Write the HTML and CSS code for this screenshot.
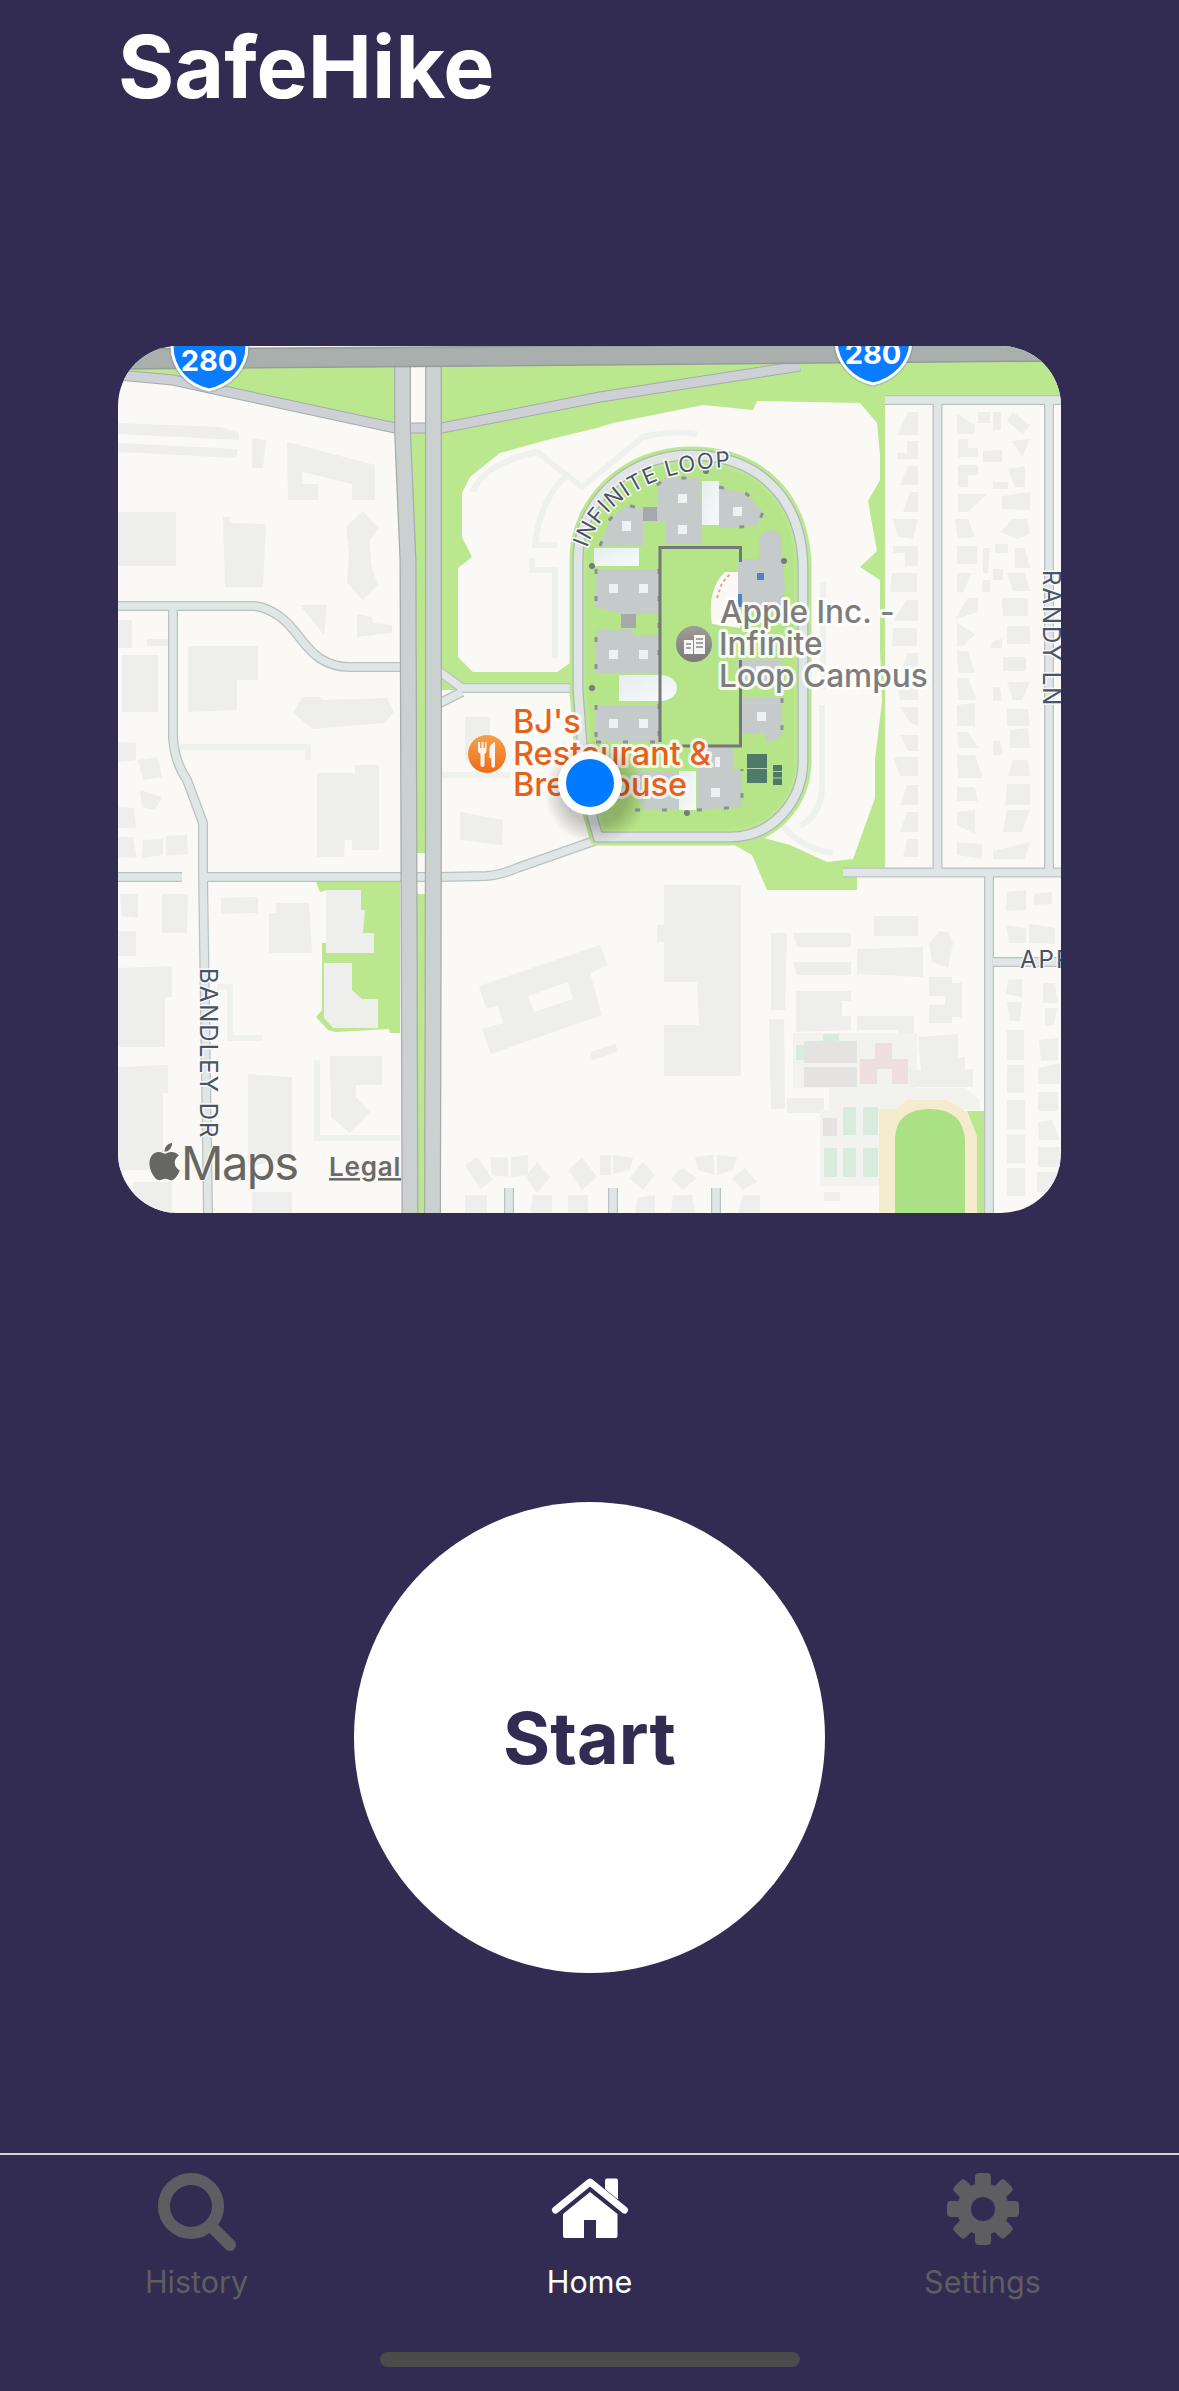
FILE: index.html
```html
<!DOCTYPE html>
<html lang="en">
<head>
  <meta charset="UTF-8">
  <meta name="viewport" content="width=device-width, initial-scale=1.0">
  <title>SafeHike</title>
  <link rel="stylesheet" href="styles.css">
</head>
<body>

  <div class="screen">
    <h1 class="title">SafeHike</h1>

    <div class="map">
      <!-- viewBox uses page coordinates so shapes can be read straight off the screenshot -->
      <svg class="map-svg" viewBox="118 346 943 867" width="943" height="867">
        <defs>
          <linearGradient id="wing" x1="0" y1="0" x2="1" y2="1">
            <stop offset="0" stop-color="#e6edf0"/>
            <stop offset="1" stop-color="#f7fafa"/>
          </linearGradient>
          <linearGradient id="poiFood" x1="0" y1="0" x2="0" y2="1">
            <stop offset="0" stop-color="#f5a14a"/>
            <stop offset="1" stop-color="#ee6c18"/>
          </linearGradient>
          <linearGradient id="poiOffice" x1="0" y1="0" x2="0" y2="1">
            <stop offset="0" stop-color="#a09c98"/>
            <stop offset="1" stop-color="#7c7a78"/>
          </linearGradient>
          <radialGradient id="dotShadow">
            <stop offset="0.6" stop-color="#000" stop-opacity="0.22"/>
            <stop offset="1" stop-color="#000" stop-opacity="0"/>
          </radialGradient>
          <path id="ringPath" d="M578,690 V560 C578,500 630,455 690,455 C760,455 803,500 803,570 V760 C803,802 772,837 730,837 H598 L586,795 L578,690 Z"/>
          <path id="loopLabel" d="M587,548 C603,502 655,464 750,467"/>
          <g id="streets">
            <path d="M118,606 H255 C275,609 288,622 300,638 C312,654 325,667 350,667 H402"/>
            <path d="M173,606 V737 C174,755 180,770 187,780 L203,823 V873 L208,1213"/>
            <path d="M118,877 H182 M204,877 H440 L487,876 C500,875 510,871 517,868 L597,840 L625,837 H730"/>
            <path d="M440,672 L462,688 H578 M440,703 L462,692"/>
            <path d="M885,400 H1061 M937.5,400 V872 M1049,400 V872 M843,872.5 H1061 M989,872 V1213 M993,962 H1061"/>
            <path d="M509,1188 V1213 M613,1188 V1213 M716,1188 V1213"/>
          </g>
          <g id="ramps">
            <path d="M118,375 L173,380 L233,393 L395,428 H442 L600,397 L800,366"/>
          </g>
          <g id="mainRoads">
            <path class="road-wide" d="M402.5,362 V430 L408,560 L410,1213"/>
            <path class="road-wide" d="M433.5,362 V800 L432.5,1213"/>
          </g>
        </defs>

        <rect class="m-land" x="118" y="346" width="943" height="867"/>

        <!-- parks -->
        <path class="m-park" d="M118,362 H395 V428 L233,393 L118,375 Z"/>
        <path class="m-park" d="M405,433 H428 V853 H405 Z M405,894 H428 V1213 H405 Z"/>
        <path class="m-park" d="M436,360 L1061,354 V396 H885 V869 L857,872 V890 H767 L752,855 L720,837 H600 L588,790 L575,690 H436 Z"/>
        <path class="m-park" d="M316,882 H400 V1033 H390 L389,1029 L335,1032 L328,1030 L316,1017 L322,1010 V943 H327 V890 L320,892 Z"/>
        <rect class="m-land" x="409" y="366" width="18" height="58"/>

        <!-- open ground around the campus -->
        <path class="m-land" d="M462,493 L470,477 L500,453 L547,440 L597,428 L613,423 L703,405 L753,410 L757,401 L860,403 L877,423 L880,455 L880,480 L868,501 L877,551 L860,567 L880,580 L880,651 L882,701 L875,759 L875,798 L853,859 L827,862 L790,845 L760,837 L600,800 L570,663 L557,672 L473,672 L458,657 L458,568 L472,557 L462,537 Z"/>

        <!-- footpaths -->
        <g class="m-path">
          <path d="M473,492 C480,473 500,460 537,452 L582,487 L643,437 Q670,430 697,434"/>
          <path d="M565,477 C550,490 538,515 535,545 H557 M532,558 V570 H555 V658"/>
          <path d="M823,582 V690 M822,705 V790 Q820,815 800,826 M783,826 Q800,848 833,853"/>
          <path d="M317,1060 V1138 H400 M217,987 H230 V1038 H262 M180,747 H308 V760 M442,775 H510"/>
        </g>

        <!-- buildings -->
        <path class="m-bld" fill-rule="evenodd" d="M118,423L220,427L239,433L239,440L118,434Z M118,443L238,449L236,458L118,452Z M252,438L266,440L263,468L252,468Z
          M287,442L375,465L375,500L352,500L352,484L302,472L302,484L318,484L318,500L288,500Z M118,512H176V566H118Z M223,517L230,517L230,523L266,524L263,587L225,587Z
          M363,511L378,528L370,540L371,565L378,585L363,600L347,583L349,553L346,527Z M300,605L327,605L324,635Z M357,614L372,617L373,623L392,625L392,633L357,637Z
          M118,620H132V648H118Z M147,639H168V646H147Z M122,655H158V712H122Z M188,646L258,646L258,680L237,680L237,710L188,712Z
          M302,697L320,697L322,700L387,698L394,712L385,723L313,729L293,713Z M118,742L136,743L136,760L118,762Z M138,760L158,757L162,777L143,780Z
          M317,773L355,773L355,765L379,765L379,850L352,850L352,840L345,840L344,857L317,857Z M465,717H490V760H465Z M460,812L503,820L502,845L460,840Z
          M140,790L162,797L155,810L142,807Z M118,807L134,808L136,828L118,828Z M118,837L133,837L137,858L118,857Z M143,840L163,839L163,855L142,858Z M166,836L187,835L188,854L166,856Z
          M120,894L138,894L138,918L122,916Z M162,894L188,894L187,933L162,933Z M118,931H136V956H118Z M221,898L258,897L258,913L221,914Z
          M276,903L309,903L312,953L269,953L269,913L276,913Z M326,890L361,890L361,910L365,910L363,933L374,933L374,953L326,953Z
          M324,963L352,963L352,990L362,999L378,999L378,1028L333,1028L324,1018Z M118,968L172,966L172,997L165,997L165,1047L118,1047Z
          M118,1067L168,1065L168,1093L163,1093L163,1170L118,1170Z M248,1074L292,1077L292,1157L248,1167Z
          M330,1056L382,1056L382,1085L356,1085L356,1097L370,1112L350,1133L331,1117Z M133,1182H172V1213H133Z M252,1192H292V1213H252Z
          M479,986L600,945L608,965L590,973L602,1015L491,1054L482,1029L503,1023L498,1006L486,1008Z M528,996L568,982L573,999L534,1012Z M590,1052L616,1044L617,1052L592,1060Z
          M664,885L741,885L741,1076L664,1076L664,1025L699,1025L697,982L664,982L664,942L657,942L657,925L664,925Z
          M771,933L787,933L785,1010L771,1010Z M769,1019L784,1019L785,1109L771,1109Z M793,933L851,933L851,947L797,947Z M793,962L851,962L851,975L797,975Z
          M874,916H918V936H874Z M857,949L923,947L923,977L857,974Z M940,931L948,932L953,943L948,968L932,962L929,943Z
          M929,977L952,977L952,983L962,983L962,1017L952,1017L952,1023L929,1023L929,1005L945,1005L945,996L929,996Z
          M796,991L851,991L851,1001L842,1001L842,1016L851,1016L851,1030L796,1032Z M857,1016L914,1016L914,1037L898,1037L898,1030L857,1030Z
          M787,1098H824V1113H787Z M824,1192H840V1201H824Z"/>
        <!-- houses -->
        <path class="m-bld" d="M1007,892L1026,890L1026,910L1006,911Z M1034,894L1052,892L1052,904L1034,905Z M1006,925L1026,928L1026,943L1009,943Z M1029,924L1055,928L1055,944L1029,943Z
          M1008,980L1022,979L1022,997L1006,994Z M1007,1002L1022,1002L1020,1021L1010,1021Z M1043,983L1055,983L1058,1003L1043,1003Z M1045,1008L1057,1008L1054,1025L1045,1026Z
          M1007,1030H1024V1060H1007Z M1039,1040L1058,1038L1058,1060L1041,1061Z M1007,1065H1024V1093H1007Z M1038,1068L1060,1063L1060,1084L1038,1084Z M1007,1100H1025V1129H1007Z
          M1038,1092H1058V1111H1038Z M1007,1135H1025V1163H1007Z M1038,1122L1052,1120L1060,1140L1039,1140Z M1007,1168H1025V1196H1007Z M1038,1147H1060V1167H1038Z M1037,1172H1060V1192H1037Z
          M600,1155H611V1175H600Z M613,1155L633,1158L630,1170L613,1174Z M643,1162L655,1175L643,1190L629,1178Z M695,1157L713,1155L715,1175L698,1170Z M717,1155L737,1157L733,1170L717,1175Z
          M682,1168L697,1178L682,1190L671,1178Z M745,1168L757,1182L743,1190L732,1178Z M637,1198L655,1195L655,1213L635,1213Z M673,1195L692,1195L695,1213L671,1213Z M743,1195L760,1195L760,1213L738,1213Z
          M465,1165L477,1157L493,1180L480,1189Z M490,1157L508,1158L508,1177L492,1175Z M511,1157L528,1155L528,1175L511,1177Z M525,1177L537,1162L550,1177L537,1193Z M568,1170L582,1157L597,1177L582,1190Z
          M465,1195H487V1213H465Z M533,1195L552,1195L552,1213L530,1213Z M568,1195H588V1213H568Z
          M908,412L918,412L918,435L897,435Z M907,441L918,441L918,459L897,459L897,453L907,453Z M908,466L918,466L918,485L900,485Z M910,492L918,492L918,512L903,512Z M893,519L918,519L913,539L898,537Z
          M893,546L918,546L918,566L905,566L905,553L893,553Z M892,573L917,573L917,592L890,592Z M907,600L918,600L918,621L893,621Z M893,628L917,628L917,646L892,646Z M908,653L918,653L918,673L900,673Z
          M897,682L918,682L918,700L900,700Z M900,707L918,707L918,726L910,723Z M900,735L918,735L918,751L908,751Z M893,757L918,757L918,776L900,776Z M907,785L918,785L918,805L900,805Z M907,812L918,812L918,832L900,832Z M907,839L918,839L918,857L903,857Z
          M957,414L975,425L975,434L957,434Z M978,412H990V423H978Z M993,412H1001V430H993Z M1007,421L1013,412L1030,425L1023,434Z M958,439L968,439L968,448L978,448L978,457L958,457Z M1012,441L1030,439L1022,457Z
          M983,451L1002,450L1002,462L983,462Z M958,465L978,465L978,475L968,475L968,487L958,487Z M1008,469L1025,466L1025,487L1015,487Z M993,482H1008V489H993Z M958,494L987,494L968,512L958,512Z M1002,496L1030,492L1030,510L1002,509Z
          M955,519L968,519L975,537L958,539Z M1013,519L1027,519L1030,534L1018,539L1000,532Z M957,546H977V564H957Z M995,544H1008V553H995Z M1015,548L1025,548L1030,568L1015,568Z M983,548L990,548L988,573L983,573Z
          M957,573L972,573L963,592L957,592Z M993,569H1003V580H993Z M1007,573L1025,573L1030,591L1013,591Z M983,580L990,580L990,592L982,592Z M968,598L978,598L978,612L955,619Z M1002,598L1028,598L1028,616L1003,616Z
          M957,623L975,634L963,646L957,646Z M1007,626H1030V644H1007Z M993,641L1002,639L1002,648L990,648Z M957,651L968,651L975,673L958,673Z M1003,657H1026V671H1003Z M957,678L968,678L977,700L958,700Z
          M1007,682L1030,682L1022,700L1013,700Z M993,687L1000,687L1002,701L993,701Z M957,705L975,703L975,726L957,726Z M1007,709L1028,709L1030,726L1007,726Z M957,732L968,732L978,748L958,748Z M1010,730L1028,728L1030,748L1010,748Z
          M993,741L1000,741L1003,755L993,755Z M957,755L975,755L983,778L958,778Z M1013,760L1028,760L1030,776L1008,776Z M957,787L975,787L978,801L957,801Z M1007,784L1030,784L1030,805L1005,805Z
          M957,812L975,810L975,834L957,825Z M1007,810L1030,810L1022,832L1003,832Z M957,842L982,844L982,859L957,855Z M993,851L1030,842L1025,859L993,859Z"/>

        <!-- school grounds and track -->
        <path class="m-school" d="M793,1033H917V1088H965L980,1100V1110H879V1186H820V1110H829V1088H793Z"/>
        <path class="m-court" d="M823,1034H839V1041H823Z M796,1045H804V1060H796Z M843,1107H856V1135H843Z M863,1107H878V1135H863Z M824,1148H837V1177H824Z M843,1148H856V1177H843Z M863,1148H878V1177H863Z"/>
        <path class="m-hall" d="M804,1041H857V1063H804Z M804,1067H857V1087H804Z M823,1118H837V1136H823Z"/>
        <path class="m-chapel" d="M875,1043H892V1059H908V1084H892V1069H877V1084H860V1059H875Z"/>
        <path class="m-bld" d="M918,1037L958,1034V1057H965V1069H973V1087H909V1070H921Z"/>
        <path class="m-park" d="M967,1111H985V1213H977V1137Z"/>
        <path class="m-track" d="M879,1109H897L907,1100H947L967,1112L977,1137V1213H879Z"/>
        <path class="m-infield" d="M895,1213V1137Q897,1109 930,1109Q963,1109 965,1140V1213Z"/>

        <!-- road network -->
        <g class="street-edge"><use href="#streets"/></g>
        <g class="street-fill"><use href="#streets"/></g>
        <g class="ramp-edge"><use href="#ramps"/></g>
        <g class="ramp-fill"><use href="#ramps"/></g>
        <g class="main-edge"><use href="#mainRoads"/></g>
        <g class="main-fill"><use href="#mainRoads"/></g>
        <path class="m-freeway" d="M118,349 L1061,343 V361 L118,369 Z"/>

        <!-- Infinite Loop ring and campus -->
        <use class="ring-halo" href="#ringPath"/>
        <use class="ring-edge" href="#ringPath"/>
        <use class="ring-road" href="#ringPath"/>

        <path class="m-cutout" d="M725,572 C714,582 708,600 712,624 L740,628 V572 Z"/>
        <path class="m-court-edge" d="M717,598 L722,583 L730,574"/>

        <path class="c-link" d="M643,507H657V521H643Z M621,614H636V628H621Z"/>
        <path class="c-bld" d="M657,485L665,478H700L702,544H665V521H657Z M719,487L747,494L763,512L757,526L719,528Z M600,546L610,519L627,505L643,509V546Z
          M596,569H659V614H623L596,607Z M598,629H632L635,635H659V673H596V637Z M596,705H659V742H596Z
          M738,559H759V542A11.500,11.500 0 0 1 782,542V559L785,587L782,609H738Z M738,660H782V684H738Z M740,698H782V735L773,741H765V733H740Z
          M697,748H733V769H742V807L697,810Z M635,771H679V810H642Z"/>
        <path class="c-nubs" d="M657,485L665,478H700 M719,487L747,494L763,512L757,526L719,528 M600,546L610,519L627,505L643,509 M596,569V607 M659,569V742 M596,637V673 M596,705V742 M782,698V735L773,741 M697,810L742,807V769 M635,810H679 M596,742H659"/>
        <rect class="c-wing" x="702" y="481" width="17" height="44"/>
        <rect class="c-wing" x="594" y="548" width="45" height="18"/>
        <rect class="c-wing" x="679" y="771" width="17" height="39"/>
        <path class="c-wing" d="M619,675H660C670,675 677,681 677,688C677,695 670,701 660,701H619Z"/>
        <path class="c-skylight" d="M678,494h9v9h-9Z M678,525h9v9h-9Z M733,507h9v9h-9Z M622,521h9v10h-9Z M609,584h9v9h-9Z M639,584h9v9h-9Z M609,650h9v9h-9Z M639,650h9v9h-9Z
          M609,719h9v9h-9Z M639,719h9v9h-9Z M757,712h9v9h-9Z M711,788h9v9h-9Z M715,757h5v10h-5Z M756,666h9v9h-9Z"/>
        <path class="c-court" d="M747,754H767V783H747Z M773,765H782V785H773Z"/>
        <path class="c-court-line" d="M747,768.500H767 M773,771.500H782 M773,778H782"/>
        <path class="c-blue" d="M757,573h7v7h-7Z M738,594h4v13h-4Z"/>
        <path class="c-frame" d="M660,742V547.500H740.500V562 M740.500,660V746H680"/>
        <g class="c-dots">
          <circle cx="592" cy="566" r="3"/>
          <circle cx="592" cy="688" r="3"/>
          <circle cx="706" cy="471" r="3"/>
          <circle cx="784" cy="561" r="3"/>
          <circle cx="687" cy="813" r="3"/>
        </g>

        <!-- labels -->
        <text class="label-street label-loop"><textPath href="#loopLabel">INFINITE LOOP</textPath></text>
        <text class="label-street" transform="translate(1043,570) rotate(90)">RANDY LN</text>
        <text class="label-street" transform="translate(200,968) rotate(90)">BANDLEY DR</text>
        <text class="label-street" x="1020" y="968">APPLE</text>

        <circle cx="694" cy="644" r="18" fill="url(#poiOffice)"/>
        <path class="poi-glyph" d="M684,640h9v14h-9Z M694,635h11v19h-11Z"/>
        <path class="poi-lines" d="M686,644h5 M686,648h5 M696,639h7 M696,643h7 M696,647h7"/>
        <text class="label-poi label-campus" x="720" y="623">Apple Inc. -</text>
        <text class="label-poi label-campus" x="719" y="655">Infinite</text>
        <text class="label-poi label-campus" x="719" y="687">Loop Campus</text>

        <circle cx="487" cy="754" r="19" fill="url(#poiFood)"/>
        <path class="poi-glyph" d="M478,742h2v6h1.500v-6h2v6h1.500v-6h1.500v9q0,2 -2,3v11a2,2 0 0 1 -4,0v-11q-2.500,-1 -2.500,-3Z M495,742v24a1.800,1.800 0 0 1 -3.600,0v-8h-2v-8q0,-6 5.600,-8Z"/>
        <text class="label-poi label-food" x="513" y="733">BJ's</text>
        <text class="label-poi label-food" x="513" y="765">Restaurant &amp;</text>
        <text class="label-poi label-food" x="513" y="796">Brewhouse</text>

        <!-- interstate shields -->
        <g class="shield">
          <path d="M172,330 V346 C172,370 190,386 209,390 C228,386 247,370 247,346 V330 Z"/>
          <text x="209" y="371">280</text>
        </g>
        <g class="shield">
          <path d="M836,324 V340 C836,364 854,380 873,384 C892,380 911,364 911,340 V324 Z"/>
          <text x="873" y="364">280</text>
        </g>

        <!-- current location -->
        <circle cx="596" cy="792" r="52" fill="url(#dotShadow)"/>
        <circle cx="590" cy="783" r="32" fill="#fff"/>
        <circle cx="590" cy="783" r="24" fill="#007aff"/>

        <!-- attribution -->
        <path class="maps-mark" transform="translate(146,1143) scale(1.55)" d="M12.152 6.896c-.948 0-2.415-1.078-3.96-1.04-2.04.027-3.91 1.183-4.961 3.014-2.117 3.675-.546 9.103 1.519 12.09 1.013 1.454 2.208 3.09 3.792 3.039 1.52-.065 2.09-.987 3.935-.987 1.831 0 2.35.987 3.96.948 1.637-.026 2.676-1.48 3.676-2.948 1.156-1.688 1.636-3.325 1.662-3.415-.039-.013-3.182-1.221-3.22-4.857-.026-3.04 2.48-4.494 2.597-4.559-1.429-2.09-3.623-2.324-4.39-2.376-2-.156-3.675 1.09-4.61 1.09zM15.53 3.83c.843-1.012 1.4-2.427 1.245-3.83-1.207.052-2.662.805-3.532 1.818-.78.896-1.454 2.338-1.273 3.714 1.338.104 2.715-.688 3.559-1.701"/>
        <text class="maps-word" x="181" y="1180">Maps</text>
        <text class="maps-legal" x="329" y="1176">Legal</text>
      </svg>
    </div>

    <button class="start" type="button">Start</button>

    <nav class="tabs">
      <a class="tab">
        <svg class="tab-icon" viewBox="0 0 90 80" width="90" height="80">
          <circle class="search-lens" cx="39" cy="35" r="27"/>
          <line class="search-lens" x1="61" y1="57" x2="78" y2="74"/>
        </svg>
        <span>History</span>
      </a>
      <a class="tab tab-active">
        <svg class="tab-icon" viewBox="0 0 90 80" width="90" height="80">
          <path class="home-roof" d="M10.500,39 L45,11 L79.500,39"/>
          <path d="M60,9.500a2,2 0 0 1 2,-2h9a2,2 0 0 1 2,2v19L60,18Z"/>
          <path d="M45,21 L72.500,43 V65a2,2 0 0 1 -2,2H51V49H39V67H20a2,2 0 0 1 -2,-2V43Z"/>
        </svg>
        <span>Home</span>
      </a>
      <a class="tab">
        <svg class="tab-icon" viewBox="0 0 90 80" width="90" height="80">
          <g class="gear" transform="translate(45,38)">
            <circle r="26"/>
            <rect x="-8" y="-36" width="16" height="72" rx="4"/>
            <rect x="-8" y="-36" width="16" height="72" rx="4" transform="rotate(45)"/>
            <rect x="-8" y="-36" width="16" height="72" rx="4" transform="rotate(90)"/>
            <rect x="-8" y="-36" width="16" height="72" rx="4" transform="rotate(135)"/>
            <circle class="gear-hole" r="12"/>
          </g>
        </svg>
        <span>Settings</span>
      </a>
    </nav>

    <div class="home-indicator"></div>
  </div>

</body>
</html>
```
FILE: styles.css
```css
body {
  margin: 0;
  background-color: #322c53;
  font-family: 'Inter', 'Liberation Sans', sans-serif;
}

.screen {
  height: 2391px;
  display: flex;
  flex-direction: column;
  overflow: hidden;
}

.title {
  margin: 0;
  padding: 14px 0 0 118px;
  height: 346px;
  box-sizing: border-box;
  font-size: 86px;
  line-height: 106px;
  font-weight: 700;
  color: #fff;
}

.map {
  width: 943px;
  height: 867px;
  margin: 0 auto;
  border-radius: 60px;
  overflow: hidden;
}

.map-svg {
  display: block;
}

.start {
  display: block;
  width: 471px;
  height: 471px;
  margin: 289px auto 0;
  padding: 0;
  border: none;
  border-radius: 50%;
  background-color: #fff;
  color: #322c53;
  font-family: inherit;
  font-size: 72px;
  font-weight: 700;
}

.tabs {
  margin-top: 180px;
  padding-top: 16px;
  border-top: 2px solid #d4d4d6;
  display: grid;
  grid-template-columns: repeat(3, 1fr);
}

.tab {
  display: flex;
  flex-direction: column;
  align-items: center;
  color: #5e5d62;
  font-size: 30.5px;
  line-height: 36px;
}

.tab-active {
  color: #fff;
}

.tab-icon {
  display: block;
  margin-bottom: 13px;
  fill: currentColor;
}

.search-lens {
  fill: none;
  stroke: currentColor;
  stroke-width: 12;
  stroke-linecap: round;
}

.home-roof {
  fill: none;
  stroke: currentColor;
  stroke-width: 7;
  stroke-linecap: round;
  stroke-linejoin: round;
}

.gear-hole {
  fill: #322c53;
}

.home-indicator {
  width: 420px;
  height: 15px;
  margin: 52px auto 0;
  border-radius: 8px;
  background-color: #4b4b4b;
}

/* map layers */
.m-land { fill: #faf9f5; }
.m-park { fill: #bbe88f; }
.m-bld { fill: #eeeeec; }
.m-school { fill: #f2f3ee; }
.m-court { fill: #d9ebdd; }
.m-hall { fill: #e4e3e1; }
.m-chapel { fill: #eedfdf; }
.m-track { fill: #f5ebce; }
.m-infield { fill: #a9e184; }
.m-freeway { fill: #a9afad; stroke: #969c9a; stroke-width: 1.5; }
.m-cutout { fill: #faf9f5; }
.m-court-edge { fill: none; stroke: #e2a58c; stroke-width: 2; stroke-dasharray: 3 3; }

.m-path {
  fill: none;
  stroke: #eff1ef;
  stroke-width: 6;
}

.street-edge, .street-fill, .ramp-edge, .ramp-fill, .main-edge, .main-fill {
  fill: none;
}

.street-edge { stroke: #bac1c2; stroke-width: 10; }
.street-fill { stroke: #e0e6e6; stroke-width: 7.5; }
.ramp-edge { stroke: #a6abad; stroke-width: 11; }
.ramp-fill { stroke: #cdd0d4; stroke-width: 9; }
.main-edge { stroke: #a6acac; stroke-width: 17; }
.main-fill { stroke: #cbd1d1; stroke-width: 14.5; }

.ring-halo { fill: #b6e488; stroke: #bbe88f; stroke-width: 17; stroke-linejoin: round; }
.ring-edge { fill: none; stroke: #b0b7b9; stroke-width: 11; }
.ring-road { fill: none; stroke: #dfe4e5; stroke-width: 8.5; }

.c-bld { fill: #c5cacb; }
.c-link { fill: #a5a9ab; }
.c-nubs { fill: none; stroke: #8c9193; stroke-width: 3; stroke-dasharray: 5 22; }
.c-wing { fill: url(#wing); }
.c-skylight { fill: #edf3f4; }
.c-court { fill: #4f7a68; }
.c-court-line { fill: none; stroke: #b8cdb9; stroke-width: 1; }
.c-blue { fill: #4a86c5; }
.c-frame { fill: none; stroke: #75787a; stroke-width: 3; }
.c-dots { fill: #77797b; }

.label-street {
  font-size: 24px;
  letter-spacing: 2px;
  fill: #47536a;
  stroke: #faf9f5;
  stroke-width: 3px;
  paint-order: stroke;
}

.label-loop {
  font-size: 22px;
  letter-spacing: 1.5px;
}

.label-poi {
  font-weight: 500;
  stroke: rgba(255, 255, 255, 0.85);
  stroke-width: 6px;
  stroke-linejoin: round;
  paint-order: stroke;
}

.label-campus { font-size: 31.6px; fill: #7d7d7d; }
.label-food { font-size: 32.5px; fill: #e8611a; }

.poi-glyph { fill: #fff; opacity: 0.92; }
.poi-lines { fill: none; stroke: #8a8886; stroke-width: 1.5; }

.shield path {
  fill: #0a7cff;
  stroke: #fff;
  stroke-width: 3;
  filter: drop-shadow(0 0 1px #5a7199);
}

.shield text {
  font-size: 29px;
  font-weight: 700;
  fill: #fff;
  text-anchor: middle;
}

.maps-mark { fill: #666663; }

.maps-word {
  font-size: 47px;
  letter-spacing: -1.5px;
  fill: #666663;
  stroke: #faf9f5;
  stroke-width: 2px;
  paint-order: stroke;
}

.maps-legal {
  font-size: 26px;
  font-weight: 600;
  letter-spacing: 0.8px;
  fill: #6b6b68;
  text-decoration: underline;
}
```
